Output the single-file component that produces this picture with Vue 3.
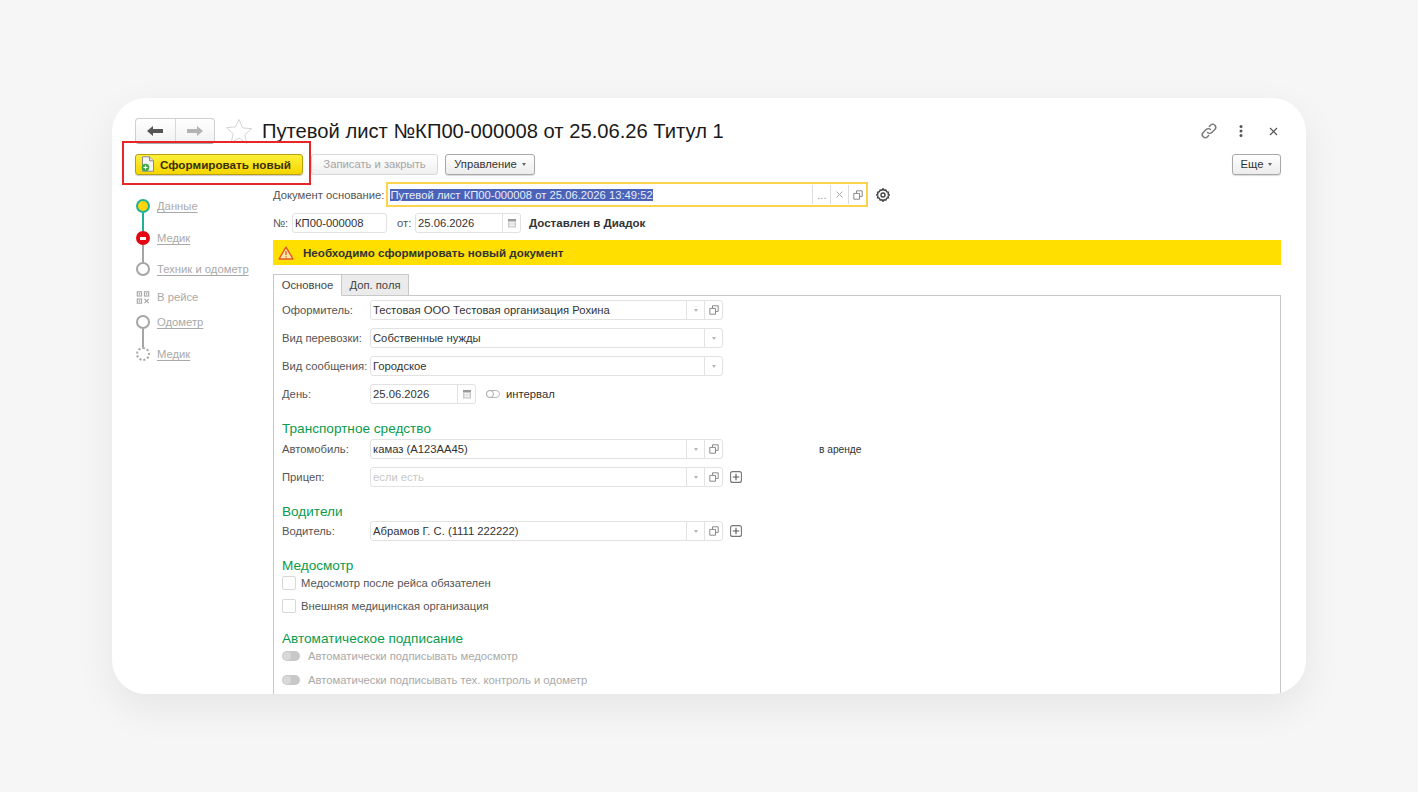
<script setup>
const steps = [
  { label: 'Данные', kind: 'done', line: 'teal' },
  { label: 'Медик', kind: 'stop', line: 'gray' },
  { label: 'Техник и одометр', kind: 'empty' },
  { label: 'В рейсе', kind: 'qr' },
  { label: 'Одометр', kind: 'empty', line: 'gray' },
  { label: 'Медик', kind: 'dashed' },
]

const topRows = [
  { label: 'Оформитель:', value: 'Тестовая ООО Тестовая организация Рохина', copy: true },
  { label: 'Вид перевозки:', value: 'Собственные нужды' },
  { label: 'Вид сообщения:', value: 'Городское' },
]
</script>

<template>
  <div class="page">
    <svg class="defs" width="0" height="0">
      <symbol id="copy" viewBox="0 0 10 10">
        <path d="M3.5 3V.8h5.7v5.6H7M.8 3.4h5.7v5.8H.8z" fill="none" stroke="currentColor" stroke-width="1" />
      </symbol>
      <symbol id="cal" viewBox="0 0 10 10">
        <path d="M1 1.5h8V9.5H1z" fill="#c9c9c9" />
        <path d="M1 1h8v2H1z" fill="#9a9a9a" />
        <path d="M2 4.5h6M2 6h6M2 7.5h6M3.5 3.8v4.8M5 3.8v4.8M6.5 3.8v4.8" stroke="#fff" stroke-width=".6" />
      </symbol>
      <symbol id="plus" viewBox="0 0 12 12">
        <rect x=".6" y=".6" width="10.8" height="10.8" rx="2" fill="none" stroke="#777" stroke-width="1.1" />
        <path d="M6 2.8v6.4M2.8 6h6.4" stroke="#555" stroke-width="1.1" />
      </symbol>
    </svg>

    <div class="card">
      <header class="head">
        <div class="nav">
          <button class="nav__btn">
            <svg width="16" height="12" viewBox="0 0 16 12"><path d="M0 6l6-5v3h10v4H6v3z" fill="#555" /></svg>
          </button>
          <button class="nav__btn">
            <svg width="16" height="12" viewBox="0 0 16 12"><path d="M16 6l-6-5v3H0v4h10v3z" fill="#b4b4b4" /></svg>
          </button>
        </div>
        <svg class="star" width="28" height="26" viewBox="0 0 28 26">
          <path d="M14 1.5l3.6 8.4 9 .8-6.8 6 2 8.8L14 20l-7.8 4.5 2-8.8-6.8-6 9-.8z" fill="none" stroke="#d4d4d4" stroke-width="1" />
        </svg>
        <h1 class="title">Путевой лист №КП00-000008 от 25.06.26 Титул 1</h1>
        <div class="head__tools">
          <svg width="18" height="18" viewBox="0 0 18 18" fill="none" stroke="#777" stroke-width="1.4" stroke-linecap="round">
            <path d="M7.5 10.5a3 3 0 0 0 4.3 0l3-3a3 3 0 0 0-4.3-4.3L9.3 4.4" />
            <path d="M10.5 7.5a3 3 0 0 0-4.3 0l-3 3a3 3 0 0 0 4.3 4.3l1.2-1.2" />
          </svg>
          <svg width="4" height="12" viewBox="0 0 4 12"><circle cx="2" cy="1.5" r="1.5" fill="#555" /><circle cx="2" cy="6" r="1.5" fill="#555" /><circle cx="2" cy="10.5" r="1.5" fill="#555" /></svg>
          <svg class="head__close" width="9" height="9" viewBox="0 0 9 9"><path d="M1 1l7 7M8 1L1 8" stroke="#555" stroke-width="1.2" /></svg>
        </div>
      </header>

      <div class="commands">
        <button class="btn btn--primary">
          <svg width="14" height="16" viewBox="0 0 14 16">
            <path d="M1.5.8h7l4 4v10.4h-11z" fill="#f4f4f4" stroke="#8a8a8a" />
            <path d="M8.5.8v4h4" fill="#ddd" stroke="#8a8a8a" />
            <circle cx="4.5" cy="11.5" r="3.8" fill="#3fa648" />
            <path d="M4.5 9.4v4.2M2.4 11.5h4.2" stroke="#fff" stroke-width="1.2" />
          </svg>
          Сформировать новый
        </button>
        <button class="btn btn--disabled">Записать и закрыть</button>
        <button class="btn btn--menu btn--manage">Управление <i class="caret"></i></button>
        <button class="btn btn--menu btn--more">Еще <i class="caret"></i></button>
        <div class="highlight"></div>
      </div>

      <div class="body">
        <aside class="steps">
          <template v-for="(s, i) in steps" :key="i">
            <div class="step" :class="'step--' + s.kind">
              <svg v-if="s.kind === 'qr'" class="step__qr" width="13" height="13" viewBox="0 0 13 13" fill="none" stroke="#aaa" stroke-width="1.2">
                <rect x=".8" y=".8" width="4.2" height="4.2" /><rect x="8" y=".8" width="4.2" height="4.2" /><rect x=".8" y="8" width="4.2" height="4.2" />
                <path d="M2.9 2v1.8M10.1 2v1.8M2.9 9.2V11" />
                <path d="M8 8l4.2 4.2M12.2 8L8 12.2" />
              </svg>
              <span v-else class="step__dot"></span>
              <span class="step__label">{{ s.label }}</span>
            </div>
            <div v-if="s.line" class="step__line" :class="'step__line--' + s.line"></div>
          </template>
        </aside>

        <main class="main">
          <div class="basis">
            <span class="lbl">Документ основание:</span>
            <div class="basis__field">
              <span class="basis__text"><mark>Путевой лист КП00-000008 от 25.06.2026 13:49:52</mark></span>
              <span class="basis__act">...</span>
              <span class="basis__act">
                <svg width="7" height="7" viewBox="0 0 7 7"><path d="M.5.5l6 6M6.5.5l-6 6" stroke="#aaa" /></svg>
              </span>
              <span class="basis__act"><svg class="ico" width="10" height="10"><use href="#copy" /></svg></span>
            </div>
            <svg class="gear" width="14" height="14" viewBox="0 0 14 14">
              <path d="M7 .8l1.1 1.5 1.8-.3.7 1.7 1.8.5-.3 1.8L13.4 7l-1.3 1 .3 1.8-1.8.5-.7 1.7-1.8-.3L7 13.2l-1.1-1.5-1.8.3-.7-1.7-1.8-.5.3-1.8L.6 7l1.3-1-.3-1.8 1.8-.5.7-1.7 1.8.3z" fill="none" stroke="#444" stroke-width="1.5" />
              <circle cx="7" cy="7" r="2" fill="none" stroke="#444" stroke-width="1.4" />
            </svg>
          </div>

          <div class="numrow">
            <span class="lbl numrow__no">№:</span>
            <div class="field field--num"><span class="field__text">КП00-000008</span></div>
            <span class="lbl numrow__from">от:</span>
            <div class="field field--date">
              <span class="field__text">25.06.2026</span>
              <span class="field__act"><svg width="10" height="10"><use href="#cal" /></svg></span>
            </div>
            <b class="numrow__state">Доставлен в Диадок</b>
          </div>

          <div class="banner">
            <svg width="16" height="14" viewBox="0 0 16 14">
              <path d="M8 1.2L15 13H1z" fill="#ffe9a0" stroke="#e2552b" stroke-width="1.4" stroke-linejoin="round" />
              <path d="M8 5v4M8 10.2v1.3" stroke="#e2552b" stroke-width="1.3" />
            </svg>
            Необходимо сформировать новый документ
          </div>

          <div class="tabs">
            <span class="tab tab--on">Основное</span>
            <span class="tab">Доп. поля</span>
          </div>

          <section class="panel">
            <div v-for="r in topRows" :key="r.label" class="row">
              <span class="lbl row__lbl">{{ r.label }}</span>
              <div class="field field--wide">
                <span class="field__text">{{ r.value }}</span>
                <span class="field__act"><i class="caret caret--light"></i></span>
                <span v-if="r.copy" class="field__act"><svg class="ico" width="10" height="10"><use href="#copy" /></svg></span>
              </div>
            </div>

            <div class="row">
              <span class="lbl row__lbl">День:</span>
              <div class="field field--day">
                <span class="field__text">25.06.2026</span>
                <span class="field__act"><svg width="10" height="10"><use href="#cal" /></svg></span>
              </div>
              <span class="toggle toggle--off"></span>
              <span class="row__note">интервал</span>
            </div>

            <h2 class="group">Транспортное средство</h2>
            <div class="row row--first">
              <span class="lbl row__lbl">Автомобиль:</span>
              <div class="field field--wide">
                <span class="field__text">камаз (А123АА45)</span>
                <span class="field__act"><i class="caret caret--light"></i></span>
                <span class="field__act"><svg class="ico" width="10" height="10"><use href="#copy" /></svg></span>
              </div>
              <span class="row__rent">в аренде</span>
            </div>
            <div class="row">
              <span class="lbl row__lbl">Прицеп:</span>
              <div class="field field--wide">
                <span class="field__text field__text--hint">если есть</span>
                <span class="field__act"><i class="caret caret--light"></i></span>
                <span class="field__act"><svg class="ico" width="10" height="10"><use href="#copy" /></svg></span>
              </div>
              <svg class="row__plus" width="12" height="12"><use href="#plus" /></svg>
            </div>

            <h2 class="group">Водители</h2>
            <div class="row row--near">
              <span class="lbl row__lbl">Водитель:</span>
              <div class="field field--wide">
                <span class="field__text">Абрамов Г. С. (1111 222222)</span>
                <span class="field__act"><i class="caret caret--light"></i></span>
                <span class="field__act"><svg class="ico" width="10" height="10"><use href="#copy" /></svg></span>
              </div>
              <svg class="row__plus" width="12" height="12"><use href="#plus" /></svg>
            </div>

            <h2 class="group">Медосмотр</h2>
            <label class="check check--first"><span class="check__box"></span>Медосмотр после рейса обязателен</label>
            <label class="check"><span class="check__box"></span>Внешняя медицинская организация</label>

            <h2 class="group">Автоматическое подписание</h2>
            <div class="auto auto--first"><span class="toggle"></span>Автоматически подписывать медосмотр</div>
            <div class="auto"><span class="toggle"></span>Автоматически подписывать тех. контроль и одометр</div>
          </section>
        </main>
      </div>
    </div>
  </div>
</template>

<style>
body {
  background: #f6f6f6;
}
</style>

<style scoped>
.page {
  height: 792px;
  padding: 98px 112px;
  box-sizing: border-box;
  overflow: hidden;
  font-family: "Liberation Sans", Arial, sans-serif;
  font-size: 11.25px;
  color: #333;
}

.defs {
  position: absolute;
}

.card {
  height: 596px;
  background: #fff;
  border-radius: 34px;
  box-shadow: 0 14px 40px rgba(0, 0, 0, 0.07);
  overflow: hidden;
  padding: 20px 24px 0 23px;
  box-sizing: border-box;
}

.head {
  display: flex;
  align-items: center;
  height: 26px;
}

.nav {
  display: flex;
  width: 80px;
  height: 26px;
  box-sizing: border-box;
  border: 1px solid #cfcfcf;
  border-bottom-color: #aaa;
  border-radius: 4px;
  background: linear-gradient(#fff, #f1f1f1);
}

.nav__btn {
  flex: 1;
  border: 0;
  background: none;
  padding: 0;
  display: flex;
  align-items: center;
  justify-content: center;
}

.nav__btn + .nav__btn {
  border-left: 1px solid #d8d8d8;
}

.star {
  margin-left: 10px;
}

.title {
  margin: 0 0 0 9px;
  font-size: 20.2px;
  font-weight: 400;
  color: #1a1a1a;
  white-space: nowrap;
}

.head__tools {
  margin-left: auto;
  display: flex;
  align-items: center;
  gap: 21px;
  padding-right: 4px;
}

.head__close {
  margin-left: 5px;
}

.commands {
  position: relative;
  display: flex;
  align-items: center;
  gap: 8px;
  margin-top: 9px;
  height: 22px;
  padding-right: 1px;
}

.btn {
  height: 21px;
  box-sizing: border-box;
  border-radius: 3px;
  font-family: inherit;
  font-size: 11.25px;
  padding: 0;
  display: flex;
  align-items: center;
  justify-content: center;
  white-space: nowrap;
}

.btn--primary {
  width: 168px;
  gap: 5px;
  font-size: 11.7px;
  font-weight: 700;
  color: #3a3000;
  border: 1px solid #b89f10;
  background: linear-gradient(#fff03a, #f5d500);
  justify-content: flex-start;
  padding-left: 5px;
  box-shadow: 0 1px 1px rgba(0, 0, 0, 0.2);
}

.btn--disabled {
  width: 127px;
  color: #a5a5a5;
  border: 1px solid #d8d8d8;
  background: linear-gradient(#fff, #f0f0f0);
}

.btn--menu {
  width: 90px;
  gap: 5px;
  color: #333;
  border: 1px solid #a8a8a8;
  background: linear-gradient(#fff, #ececec);
  box-shadow: 0 1px 1px rgba(0, 0, 0, 0.15);
}

.btn--manage {
  margin-left: -1px;
}

.btn--more {
  width: 49px;
  margin-left: auto;
}

.caret {
  display: inline-block;
  width: 0;
  height: 0;
  border-left: 2.5px solid transparent;
  border-right: 2.5px solid transparent;
  border-top: 3px solid #666;
}

.caret--light {
  border-top-color: #b5b5b5;
}

.highlight {
  position: absolute;
  left: -13px;
  top: -12px;
  width: 189px;
  height: 44px;
  box-sizing: border-box;
  border: 2px solid #e8262a;
  pointer-events: none;
}

.body {
  display: flex;
  margin-top: 7px;
}

.steps {
  width: 138px;
  flex: none;
  padding-top: 17px;
  color: #a9a9a9;
}

.step {
  display: flex;
  align-items: center;
  height: 14px;
  gap: 7px;
  margin-left: 1px;
}

.step__dot {
  width: 14px;
  height: 14px;
  box-sizing: border-box;
  border-radius: 50%;
  border: 2px solid #a5a5a5;
  flex: none;
  background: #fff;
}

.step--done .step__dot {
  border-color: #1fb196;
  background: #ffd60a;
}

.step--stop .step__dot {
  border-color: #e30613;
  background: #e30613;
  position: relative;
}

.step--stop .step__dot::after {
  content: "";
  position: absolute;
  left: 2px;
  top: 3.5px;
  width: 6px;
  height: 3px;
  background: #fff;
}

.step--dashed .step__dot {
  border-style: dotted;
}

.step__label {
  text-decoration: underline;
  text-underline-offset: 2px;
}

.step--qr {
  margin: 14px 0 11px 1px;
}

.step--qr .step__label {
  text-decoration: none;
}

.step__qr {
  width: 14px;
}

.step__line {
  width: 2px;
  height: 18px;
  margin-left: 7px;
}

.step--stop + .step__line {
  height: 17px;
}

.step__line--teal {
  background: #1fb196;
}

.step__line--gray {
  background: #a5a5a5;
}

.main {
  flex: 1;
  min-width: 0;
  padding-right: 1px;
}

.lbl {
  color: #555;
  white-space: nowrap;
}

.basis {
  display: flex;
  align-items: center;
  height: 25px;
}

.basis__field {
  width: 482px;
  height: 25px;
  margin-left: 2px;
  box-sizing: border-box;
  border: 2px solid #fbd44e;
  display: flex;
  align-items: center;
}

.basis__text {
  flex: 1;
  padding-left: 2px;
}

.basis__text mark {
  background: #4a63b8;
  color: #e8ecf8;
}

.basis__act {
  width: 17px;
  height: 19px;
  border-left: 1px solid #ddd;
  display: flex;
  align-items: center;
  justify-content: center;
  color: #999;
}

.ico {
  color: #8a8a8a;
}

.gear {
  margin-left: 8px;
}

.numrow {
  display: flex;
  align-items: center;
  height: 20px;
  margin-top: 6px;
}

.numrow__no {
  width: 19px;
}

.numrow__from {
  width: 18px;
  margin-left: 10px;
}

.numrow__state {
  margin-left: 8px;
  font-size: 11.5px;
  color: #333;
}

.field {
  height: 20px;
  box-sizing: border-box;
  border: 1px solid #e2e2e2;
  border-radius: 3px;
  background: #fff;
  display: flex;
  align-items: center;
  flex: none;
}

.field__text {
  flex: 1;
  padding-left: 2px;
  white-space: nowrap;
  overflow: hidden;
}

.field__text--hint {
  color: #c8c8c8;
}

.field__act {
  width: 17px;
  height: 100%;
  border-left: 1px solid #e2e2e2;
  display: flex;
  align-items: center;
  justify-content: center;
  flex: none;
}

.field--num {
  width: 95px;
}

.field--date {
  width: 106px;
}

.field--wide {
  width: 353px;
}

.field--day {
  width: 106px;
}

.banner {
  display: flex;
  align-items: center;
  gap: 9px;
  height: 25px;
  margin-top: 7px;
  padding-left: 5px;
  background: #ffdf00;
  font-size: 11.6px;
  font-weight: 700;
  color: #333;
}

.tabs {
  display: flex;
  margin-top: 9px;
  height: 22px;
  margin-bottom: -1px;
}

.tab {
  width: 67px;
  height: 22px;
  box-sizing: border-box;
  padding-top: 4px;
  text-align: center;
  border: 1px solid #c8c8c8;
  border-left: 0;
  background: #ebebeb;
  color: #444;
}

.tab--on {
  position: relative;
  z-index: 1;
  width: 69px;
  border-left: 1px solid #c8c8c8;
  border-bottom-color: #fff;
  background: #fff;
}

.panel {
  height: 420px;
  border: 1px solid #c8c8c8;
  padding: 4px 0 0 8px;
}

.row {
  display: flex;
  align-items: center;
  height: 20px;
  margin-bottom: 8px;
}

.row__lbl {
  width: 88px;
  flex: none;
}

.row__note {
  margin-left: 6px;
}

.row__rent {
  margin-left: 96px;
  font-size: 10.2px;
}

.row__plus {
  margin-left: 7px;
}

.row--first {
  margin-top: 2px;
}

.row--near {
  margin-top: 1px;
}

.toggle {
  width: 18px;
  height: 10px;
  border-radius: 5px;
  background: #c8c8c8;
  box-sizing: border-box;
  position: relative;
  flex: none;
}

.toggle::after {
  content: "";
  position: absolute;
  left: 1px;
  top: 1px;
  width: 8px;
  height: 8px;
  border-radius: 50%;
  background: #d9d9d9;
}

.toggle--off {
  margin-left: 10px;
  width: 14px;
  height: 8px;
  background: #fff;
  border: 1px solid #bbb;
}

.toggle--off::after {
  left: -1px;
  top: -1px;
  background: #fff;
  border: 1px solid #aaa;
  box-sizing: border-box;
}

.group {
  margin: 17px 0 0;
  font-size: 13.6px;
  font-weight: 400;
  line-height: 16px;
  color: #0a9b4c;
}

.check {
  display: flex;
  align-items: center;
  gap: 5px;
  height: 16px;
  margin-bottom: 7px;
  color: #555;
}

.check--first {
  margin-top: 1px;
}

.check__box {
  width: 14px;
  height: 14px;
  box-sizing: border-box;
  border: 1px solid #d8d8d8;
  border-radius: 2px;
  background: #fff;
}

.auto {
  display: flex;
  align-items: center;
  gap: 8px;
  height: 16px;
  margin-bottom: 8px;
  color: #a9a9a9;
}

.auto--first {
  margin-top: 1px;
}
</style>
